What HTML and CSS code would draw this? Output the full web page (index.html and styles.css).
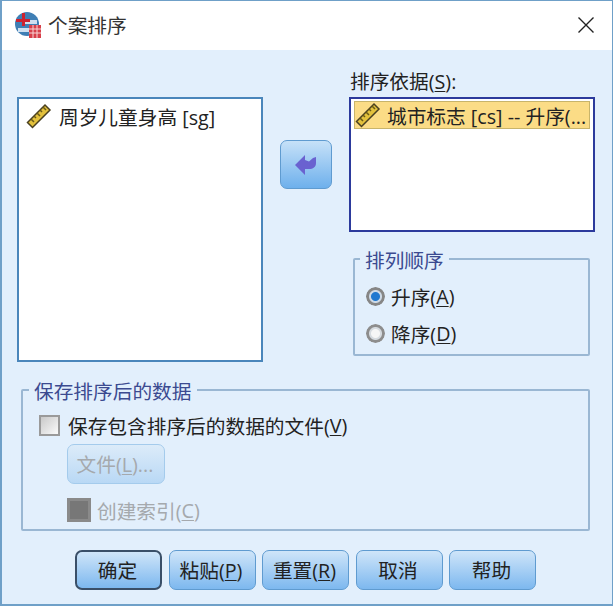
FILE: index.html
```html
<!DOCTYPE html>
<html lang="zh-CN">
<head>
    <meta charset="UTF-8">
    <title>个案排序</title>
    <link rel="stylesheet" href="styles.css">
</head>
<body>
    <div class="window">
        <div class="titlebar">
            <svg class="app-icon" width="28" height="28" viewBox="0 0 28 28">
                <circle cx="13" cy="13" r="12" fill="#3f7fb5"/>
                <path d="M11 9h12v4H11zM4 17h12v4H4z" fill="#cfe0f0"/>
                <path d="M2 8h14v3H2z" fill="#cc2230"/>
                <path d="M8 2h3v13H8z" fill="#cc2230"/>
                <rect x="15" y="14" width="12" height="13" fill="#d8404a"/>
                <path d="M15 18h12M15 22h12M19 14v13M23 14v13" stroke="#f6d5d5" stroke-width="1"/>
            </svg>
            <span class="title">个案排序</span>
            <svg class="close" width="18" height="18" viewBox="0 0 18 18">
                <path d="M1.5 1.5l15 15M16.5 1.5l-15 15" stroke="#222" stroke-width="1.4" fill="none"/>
            </svg>
        </div>

        <div class="content">
            <div class="main">
                <div class="source-list">
                    <div class="list-item">
                        <svg class="ruler" width="26" height="26" viewBox="0 0 26 26">
                            <path d="M1.5 19.5L19 2l5 5L6.500 24.500z" fill="#e3c13c" stroke="#4a4020" stroke-width="1.500"/>
                            <path d="M5 16l3 3M8 13l2 2M11 10l3 3M14 7l2 2M17 4l3 3" stroke="#6a5a18" stroke-width="1.500"/>
                        </svg>
                        <span>周岁儿童身高 [sg]</span>
                    </div>
                </div>

                <button class="arrow-button">
                    <svg width="24" height="24" viewBox="0 0 24 24">
                        <path d="M1 12L11 2v5l4 1.500 4-3.500 3-1v6c0 4-3 6-7 6h-4v6z" fill="#6a62d0"/>
                    </svg>
                </button>

                <div class="right-col">
                    <div class="list-label">排序依据(<u>S</u>):</div>
                    <div class="target-list">
                        <div class="list-item selected">
                            <svg class="ruler" width="26" height="26" viewBox="0 0 26 26">
                                <path d="M1.5 19.5L19 2l5 5L6.500 24.500z" fill="#e3c13c" stroke="#4a4020" stroke-width="1.500"/>
                                <path d="M5 16l3 3M8 13l2 2M11 10l3 3M14 7l2 2M17 4l3 3" stroke="#6a5a18" stroke-width="1.500"/>
                            </svg>
                            <span>城市标志 [cs] -- 升序(...</span>
                        </div>
                    </div>

                    <fieldset class="group order-group">
                        <legend>排列顺序</legend>
                        <div class="radio-row"><span class="radio on"></span>升序(<u>A</u>)</div>
                        <div class="radio-row"><span class="radio"></span>降序(<u>D</u>)</div>
                    </fieldset>
                </div>
            </div>

            <fieldset class="group save-group">
                <legend>保存排序后的数据</legend>
                <div class="check-row"><span class="checkbox"></span>保存包含排序后的数据的文件(<u>V</u>)</div>
                <button class="btn file-btn" disabled>文件(<u>L</u>)...</button>
                <div class="check-row index-row"><span class="checkbox filled"></span>创建索引(<u>C</u>)</div>
            </fieldset>

            <div class="actions">
                <button class="btn default">确定</button>
                <button class="btn">粘贴(<u>P</u>)</button>
                <button class="btn">重置(<u>R</u>)</button>
                <button class="btn">取消</button>
                <button class="btn">帮助</button>
            </div>
        </div>
    </div>
</body>
</html>
```

FILE: styles.css
```css
* {
    box-sizing: border-box;
}
body {
    margin: 0;
    font-family: 'Open Sans', 'Noto Sans CJK SC', sans-serif;
    font-size: 19.7px;
    color: #222;
    background-color: #fff;
}
u {
    text-underline-offset: 2px;
}
.window {
    width: 613px;
    height: 606px;
    display: flex;
    flex-direction: column;
    border: 1px solid #6fa0c8;
    border-width: 1px 1px 2px 2px;
    overflow: hidden;
}
.titlebar {
    height: 49px;
    flex-shrink: 0;
    display: flex;
    align-items: center;
    background-color: #fff;
    padding: 0 17px 2px 12px;
}
.app-icon {
    margin-right: 6px;
}
.title {
    flex: 1;
    color: #333;
}
.content {
    flex: 1;
    background-color: #e2effc;
    padding: 0 17px 0 15px;
}
.main {
    display: flex;
    align-items: flex-start;
}
.source-list {
    width: 246px;
    height: 265px;
    margin-top: 47px;
    background-color: #fff;
    border: 2px solid #4a86bb;
    padding: 3px 4px;
}
.list-item {
    display: flex;
    align-items: center;
    gap: 7px;
    height: 28px;
    padding-left: 3px;
    white-space: nowrap;
}
.ruler {
    flex-shrink: 0;
}
.arrow-button {
    width: 52px;
    height: 49px;
    margin: 90px 17px 0;
    padding: 0;
    display: flex;
    align-items: center;
    justify-content: center;
    border: 1px solid #5f9bd0;
    border-radius: 7px;
    background: linear-gradient(#c6e1f8, #6eb0ec);
}
.right-col {
    width: 246px;
}
.list-label {
    height: 47px;
    padding: 18px 0 0 1px;
    line-height: 28px;
}
.target-list {
    height: 135px;
    background-color: #fff;
    border: 2px solid #2c3a9c;
    padding: 2px 3px;
}
.list-item.selected {
    gap: 6px;
    background-color: #fbdc86;
    border: 1px solid #c8b46a;
    padding-left: 0;
}
.group {
    margin: 0;
    border: 2px solid #9ab7d3;
    border-radius: 2px;
}
.group legend {
    padding: 4px 5px 0;
    color: #3b4a90;
    line-height: 24px;
}
.order-group {
    width: 237px;
    height: 111px;
    margin: 13px 0 0 4px;
    padding: 5px 0 0 11px;
}
.order-group legend {
    margin-left: -6px;
}
.radio-row {
    display: flex;
    align-items: center;
    height: 37px;
}
.radio {
    width: 19px;
    height: 19px;
    margin-right: 6px;
    border-radius: 50%;
    background: radial-gradient(circle, #f6f6f6 0 4px, #d6dbe0 5px 6px, #8d8d8d 7px 9px, transparent 10px);
}
.radio.on {
    background: radial-gradient(circle, #1f78d0 0 4px, #cdd9e6 5px 6px, #868686 7px 9px, transparent 10px);
}
.save-group {
    width: 569px;
    height: 155px;
    margin: 14px 0 0 4px;
    padding: 7px 0 0 16px;
}
.save-group legend {
    margin-left: -10px;
}
.check-row {
    display: flex;
    align-items: center;
    height: 28px;
}
.checkbox {
    width: 21px;
    height: 21px;
    margin-right: 8px;
    border: 2px solid #9a9a9a;
    background: linear-gradient(135deg, #c9c9c9, #fafafa);
}
.btn {
    height: 40px;
    padding: 0 2px 2px 0;
    font: inherit;
    color: #222;
    border: 1px solid #5f9bd0;
    border-radius: 7px;
    background: linear-gradient(#cfe5f9, #7db8ef);
}
.file-btn {
    display: block;
    width: 98px;
    margin: 5px 0 0 28px;
    color: #a5a9ad;
    border-color: #a4cbec;
    background: linear-gradient(#dcebf9, #b9d8f5);
}
.index-row {
    margin: 12px 0 0 28px;
    color: #a5a9ad;
}
.checkbox.filled {
    width: 24px;
    height: 24px;
    margin-right: 6px;
    border: 3px solid #8a8a8a;
    background: #777;
}
.actions {
    display: flex;
    gap: 6.5px;
    margin: 19px 0 0 58px;
}
.actions .btn {
    width: 87px;
}
.btn.default {
    border: 2px solid #3a4f68;
}
```
